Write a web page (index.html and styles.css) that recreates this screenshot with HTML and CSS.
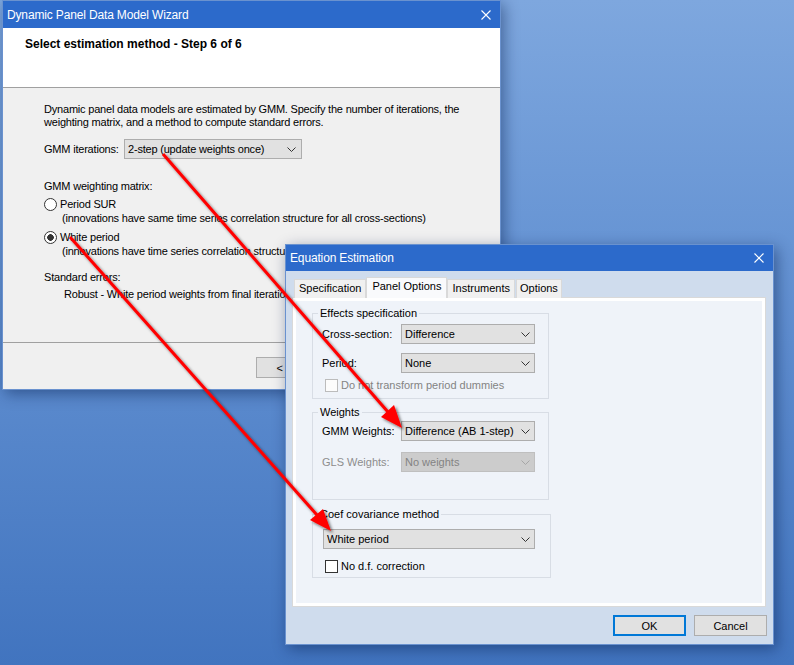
FILE: index.html
```html
<!DOCTYPE html>
<html>
<head>
<meta charset="utf-8">
<title>Dynamic Panel Data Model Wizard</title>
<link rel="stylesheet" href="styles.css">
</head>
<body>
<div class="desktop">

  <div class="window wizard">
    <div class="titlebar">
      <span class="title">Dynamic Panel Data Model Wizard</span>
      <svg class="close" width="10" height="10" viewBox="0 0 10 10"><path d="M0.5 0.5 L9.5 9.5 M9.5 0.5 L0.5 9.5" stroke="#fff" stroke-width="1.1" fill="none"/></svg>
    </div>
    <div class="wiz-header"><span class="step">Select estimation method - Step 6 of 6</span></div>
    <div class="wiz-body">
      <div class="wiz-content">
        <p class="desc">Dynamic panel data models are estimated by GMM. Specify the number of iterations, the<br>weighting matrix, and a method to compute standard errors.</p>
        <div class="iter-row">
          <span class="iter-label">GMM iterations:</span>
          <div class="combo wiz-combo"><span>2-step (update weights once)</span><svg class="chev" width="9" height="5" viewBox="0 0 9 5"><path d="M0.5 0.5 L4.5 4.5 L8.5 0.5" stroke="#333" fill="none"/></svg></div>
        </div>
        <div class="line section-label">GMM weighting matrix:</div>
        <div class="radio-row first"><span class="radio"></span><span>Period SUR</span></div>
        <div class="line radio-note">(innovations have same time series correlation structure for all cross-sections)</div>
        <div class="radio-row second"><span class="radio checked"></span><span>White period</span></div>
        <div class="line radio-note">(innovations have time series correlation structure that varies across cross-sections)</div>
        <div class="line section-label std">Standard errors:</div>
        <div class="line std-value">Robust - White period weights from final iteration</div>
      </div>
      <div class="wiz-footer">
        <button class="btn">&lt; Back</button>
        <button class="btn">Next &gt;</button>
        <button class="btn">Finish</button>
      </div>
    </div>
  </div>

  <div class="window eq">
    <div class="titlebar">
      <span class="title">Equation Estimation</span>
      <svg class="close" width="10" height="10" viewBox="0 0 10 10"><path d="M0.5 0.5 L9.5 9.5 M9.5 0.5 L0.5 9.5" stroke="#fff" stroke-width="1.1" fill="none"/></svg>
    </div>
    <div class="eq-body">
      <div class="tabs">
        <span class="tab">Specification</span>
        <span class="tab active">Panel Options</span>
        <span class="tab">Instruments</span>
        <span class="tab">Options</span>
      </div>
      <div class="panel">
        <div class="group g1">
          <span class="legend">Effects specification</span>
          <div class="field f1"><span class="field-label">Cross-section:</span><div class="combo eq-combo"><span>Difference</span><svg class="chev" width="9" height="5" viewBox="0 0 9 5"><path d="M0.5 0.5 L4.5 4.5 L8.5 0.5" stroke="#333" fill="none"/></svg></div></div>
          <div class="field f2"><span class="field-label">Period:</span><div class="combo eq-combo"><span>None</span><svg class="chev" width="9" height="5" viewBox="0 0 9 5"><path d="M0.5 0.5 L4.5 4.5 L8.5 0.5" stroke="#333" fill="none"/></svg></div></div>
          <div class="check-row c1 disabled"><span class="checkbox"></span><span>Do not transform period dummies</span></div>
        </div>
        <div class="group g2">
          <span class="legend">Weights</span>
          <div class="field f3"><span class="field-label">GMM Weights:</span><div class="combo eq-combo"><span>Difference (AB 1-step)</span><svg class="chev" width="9" height="5" viewBox="0 0 9 5"><path d="M0.5 0.5 L4.5 4.5 L8.5 0.5" stroke="#333" fill="none"/></svg></div></div>
          <div class="field f4 disabled"><span class="field-label">GLS Weights:</span><div class="combo eq-combo"><span>No weights</span><svg class="chev" width="9" height="5" viewBox="0 0 9 5"><path d="M0.5 0.5 L4.5 4.5 L8.5 0.5" stroke="#a6a6a6" fill="none"/></svg></div></div>
        </div>
        <div class="group g3">
          <span class="legend">Coef covariance method</span>
          <div class="combo cov-combo"><span>White period</span><svg class="chev" width="9" height="5" viewBox="0 0 9 5"><path d="M0.5 0.5 L4.5 4.5 L8.5 0.5" stroke="#333" fill="none"/></svg></div>
          <div class="check-row c2"><span class="checkbox"></span><span>No d.f. correction</span></div>
        </div>
      </div>
      <div class="buttons">
        <button class="btn default">OK</button>
        <button class="btn">Cancel</button>
      </div>
    </div>
  </div>

  <svg class="arrows" width="794" height="665" viewBox="0 0 794 665">
    <defs>
      <filter id="shadow" x="-20%" y="-20%" width="140%" height="140%">
        <feDropShadow dx="2" dy="2" stdDeviation="1.6" flood-color="#000" flood-opacity="0.55"/>
      </filter>
    </defs>
    <g filter="url(#shadow)">
      <line x1="163" y1="154" x2="388" y2="412" stroke="#f00" stroke-width="3"/>
      <polygon points="402,428 381,417 394,405" fill="#f00"/>
      <line x1="70" y1="237" x2="317" y2="515" stroke="#f00" stroke-width="3"/>
      <polygon points="331,531 310,520 323,509" fill="#f00"/>
    </g>
  </svg>

</div>
</body>
</html>
```

FILE: styles.css
```css
* { box-sizing: border-box; }
html, body { margin: 0; padding: 0; }
body {
  width: 794px;
  height: 665px;
  overflow: hidden;
  font-family: "Liberation Sans", Arial, sans-serif;
  font-size: 11px;
  color: #000;
}
.desktop {
  position: relative;
  width: 794px;
  height: 665px;
  background: linear-gradient(180deg, #7ea7de 0%, #6593d3 40%, #4174bf 100%);
}

/* windows */
.window {
  position: absolute;
  display: flex;
  flex-direction: column;
  border: 1px solid #6a92cf;
  box-shadow: 3px 4px 14px rgba(0, 25, 70, 0.45);
}
.titlebar {
  display: flex;
  align-items: center;
  justify-content: space-between;
  background: #2c6acb;
  color: #fff;
  font-size: 12px;
  letter-spacing: -0.15px;
  flex: none;
}
.close { display: block; }

/* wizard */
.wizard {
  left: 2px;
  top: 0;
  width: 499px;
  height: 390px;
  background: #f0f0f0;
}
.wizard .titlebar { height: 27px; padding: 0 9px 0 4px; }
.wiz-header {
  height: 60px;
  flex: none;
  background: #fff;
  border-bottom: 1px solid #a0a0a0;
  padding: 9px 0 0 22px;
}
.step { font-weight: bold; font-size: 12px; line-height: 14px; display: block; }
.wiz-body { flex: 1; display: flex; flex-direction: column; }
.wiz-content { flex: 1; padding-left: 41px; letter-spacing: -0.2px; }
.line, .desc { line-height: 13px; white-space: nowrap; }
.desc { margin: 15px 0 0; }
.iter-row { display: flex; align-items: center; margin-top: 10px; }
.iter-label { width: 80px; }
.section-label { margin-top: 21px; }
.section-label.std { margin-top: 13px; }
.radio-row { display: flex; align-items: center; gap: 3px; line-height: 13px; }
.radio-row.first { margin-top: 5px; }
.radio-row.second { margin-top: 6px; }
.radio {
  width: 13px;
  height: 13px;
  border: 1px solid #333;
  border-radius: 50%;
  background: #fff;
}
.radio.checked { background: radial-gradient(circle, #333 0 3px, #fff 3.6px); }
.radio-note { margin-top: 1px; padding-left: 18px; }
.std-value { margin-top: 4px; padding-left: 20px; }
.wiz-footer {
  height: 47px;
  flex: none;
  border-top: 1px solid #a0a0a0;
  padding: 14px 0 0 253px;
  display: flex;
  gap: 7px;
  align-items: flex-start;
}

/* combos */
.combo {
  display: flex;
  align-items: center;
  justify-content: space-between;
  height: 20px;
  border: 1px solid #adadad;
  background: #e1e1e1;
  padding: 0 4px 0 3px;
  white-space: nowrap;
}
.chev { display: block; flex: none; }
.wiz-combo { width: 178px; padding-right: 5px; }
.eq-combo { width: 134px; }
.cov-combo { width: 212px; margin: 8px 0 0 10px; }

/* buttons */
.btn {
  width: 75px;
  height: 21px;
  border: 1px solid #adadad;
  background: #e1e1e1;
  font-family: "Liberation Sans", Arial, sans-serif;
  font-size: 11px;
  color: #000;
  padding: 0;
  flex: none;
}

/* equation estimation */
.eq {
  left: 285px;
  top: 244px;
  width: 489px;
  height: 401px;
  background: #cfdced;
}
.eq .titlebar { height: 26px; padding: 0 9px 0 4px; }
.eq-body { flex: 1; display: flex; flex-direction: column; }
.tabs {
  display: flex;
  align-items: flex-end;
  height: 21px;
  margin: 6px 0 0 8px;
  position: relative;
  z-index: 1;
}
.tab {
  height: 19px;
  line-height: 17px;
  padding: 0 4px;
  margin-right: 1px;
  border: 1px solid #d9d9d9;
  border-bottom: none;
  background: #f0f0f0;
}
.tab:last-child { padding: 0 3px; }
.tab.active {
  height: 21px;
  padding: 0 5px;
  margin: 0 0 0 -1px;
  background: #f9fafc;
  border-color: #d9d9d9;
}
.panel {
  width: 474px;
  height: 310px;
  margin: -1px 0 0 6px;
  border: 1px solid #d9d9d9;
  box-shadow: inset 0 0 0 3px #fff;
  background: #eff3f9;
  padding: 15px 0 0 19px;
  flex: none;
}
.group {
  border: 1px solid #d8dde5;
  width: 237px;
}
.g1 { padding-bottom: 6px; }
.g2 { margin-top: 13px; padding-bottom: 27px; }
.g3 { margin-top: 14px; width: 239px; padding-bottom: 4px; }
.legend {
  display: block;
  width: max-content;
  margin: -7px 0 0 5px;
  padding: 0 2px;
  background: #eff3f9;
  line-height: 13px;
}
.field { display: flex; align-items: center; margin-left: 9px; }
.field-label { width: 79px; }
.f1 { margin-top: 4px; }
.f2 { margin-top: 9px; }
.f3 { margin-top: 2px; }
.f4 { margin-top: 11px; }
.field.disabled .field-label { color: #8d8d8d; }
.field.disabled .combo { background: #cccccc; border-color: #bfbfbf; color: #838383; }
.check-row { display: flex; align-items: center; gap: 3px; line-height: 13px; margin-left: 12px; }
.c1 { margin-top: 6px; }
.c2 { margin-top: 11px; }
.checkbox {
  width: 13px;
  height: 13px;
  border: 1px solid #333;
  background: #fff;
  flex: none;
}
.check-row.disabled { color: #838383; }
.check-row.disabled .checkbox { border-color: #bcbcbc; background: #fcfcfc; }
.buttons {
  display: flex;
  justify-content: flex-end;
  gap: 8px;
  margin-top: 8px;
  padding-right: 6px;
}
.buttons .btn { width: 73px; }
.btn.default { border: 2px solid #0078d7; }

/* annotation arrows */
.arrows {
  position: absolute;
  left: 0;
  top: 0;
  pointer-events: none;
}
```
